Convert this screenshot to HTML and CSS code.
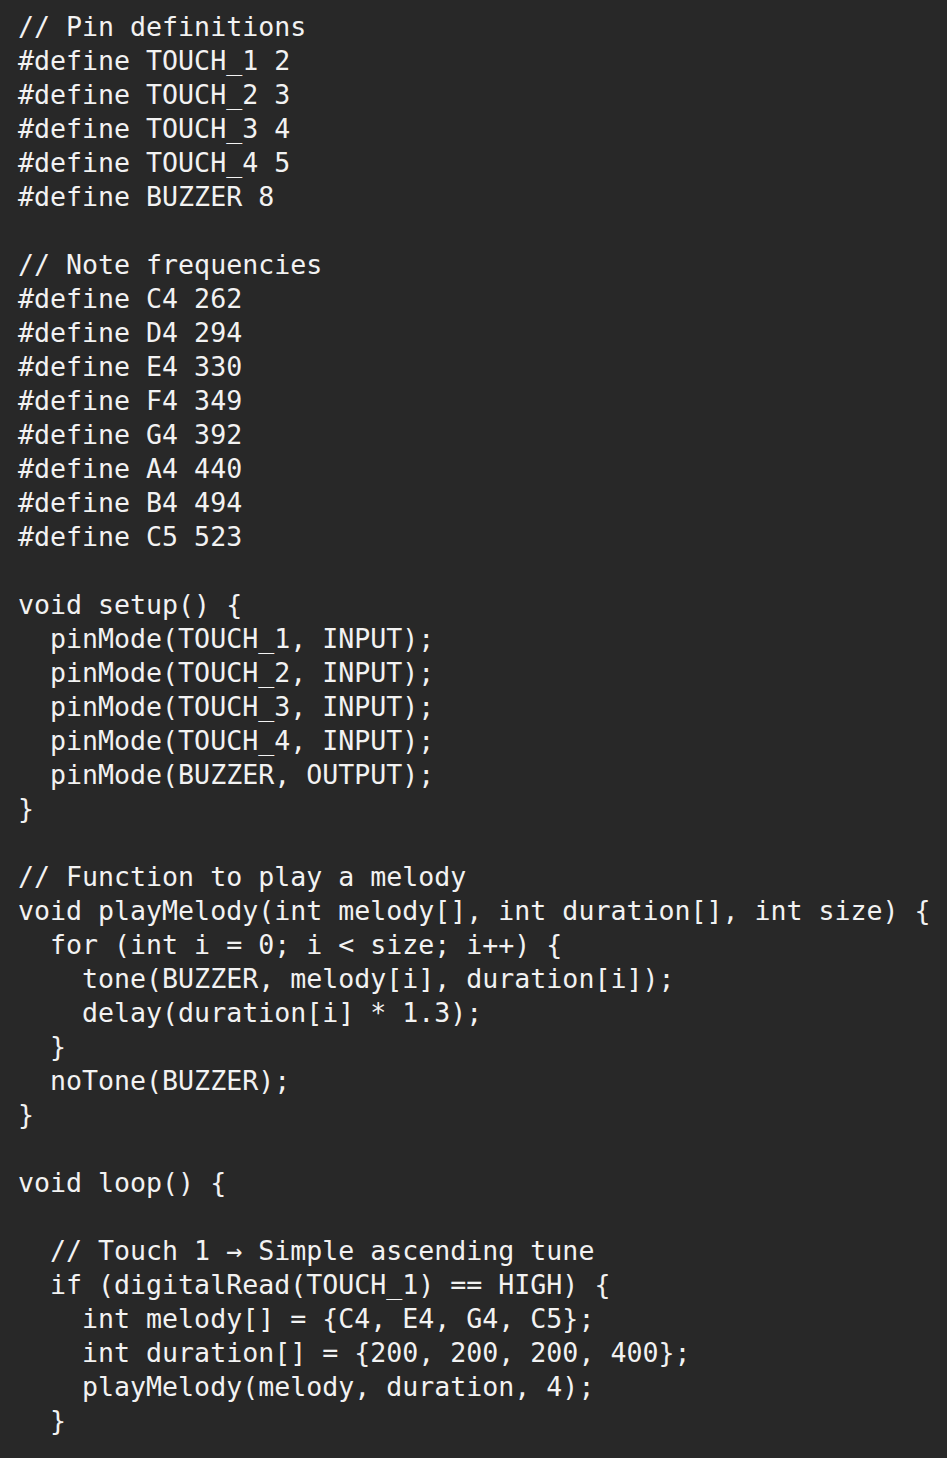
FILE: index.html
```html
<!DOCTYPE html>
<html>
<head>
<meta charset="utf-8">
<link rel="stylesheet" href="styles.css">
</head>
<body>
<pre class="code">// Pin definitions
#define TOUCH_1 2
#define TOUCH_2 3
#define TOUCH_3 4
#define TOUCH_4 5
#define BUZZER 8

// Note frequencies
#define C4 262
#define D4 294
#define E4 330
#define F4 349
#define G4 392
#define A4 440
#define B4 494
#define C5 523

void setup() {
  pinMode(TOUCH_1, INPUT);
  pinMode(TOUCH_2, INPUT);
  pinMode(TOUCH_3, INPUT);
  pinMode(TOUCH_4, INPUT);
  pinMode(BUZZER, OUTPUT);
}

// Function to play a melody
void playMelody(int melody[], int duration[], int size) {
  for (int i = 0; i &lt; size; i++) {
    tone(BUZZER, melody[i], duration[i]);
    delay(duration[i] * 1.3);
  }
  noTone(BUZZER);
}

void loop() {

  // Touch 1 → Simple ascending tune
  if (digitalRead(TOUCH_1) == HIGH) {
    int melody[] = {C4, E4, G4, C5};
    int duration[] = {200, 200, 200, 400};
    playMelody(melody, duration, 4);
  }
</pre>
</body>
</html>
```

FILE: styles.css
```css
html, body {
  margin: 0;
  padding: 0;
  background: #282828;
}
.code {
  margin: 0;
  padding: 10px 0 0 18px;
  font-family: "DejaVu Sans Mono", "Liberation Mono", monospace;
  font-size: 26.6px;
  line-height: 34px;
  color: #f2f2f2;
  white-space: pre;
}
```
